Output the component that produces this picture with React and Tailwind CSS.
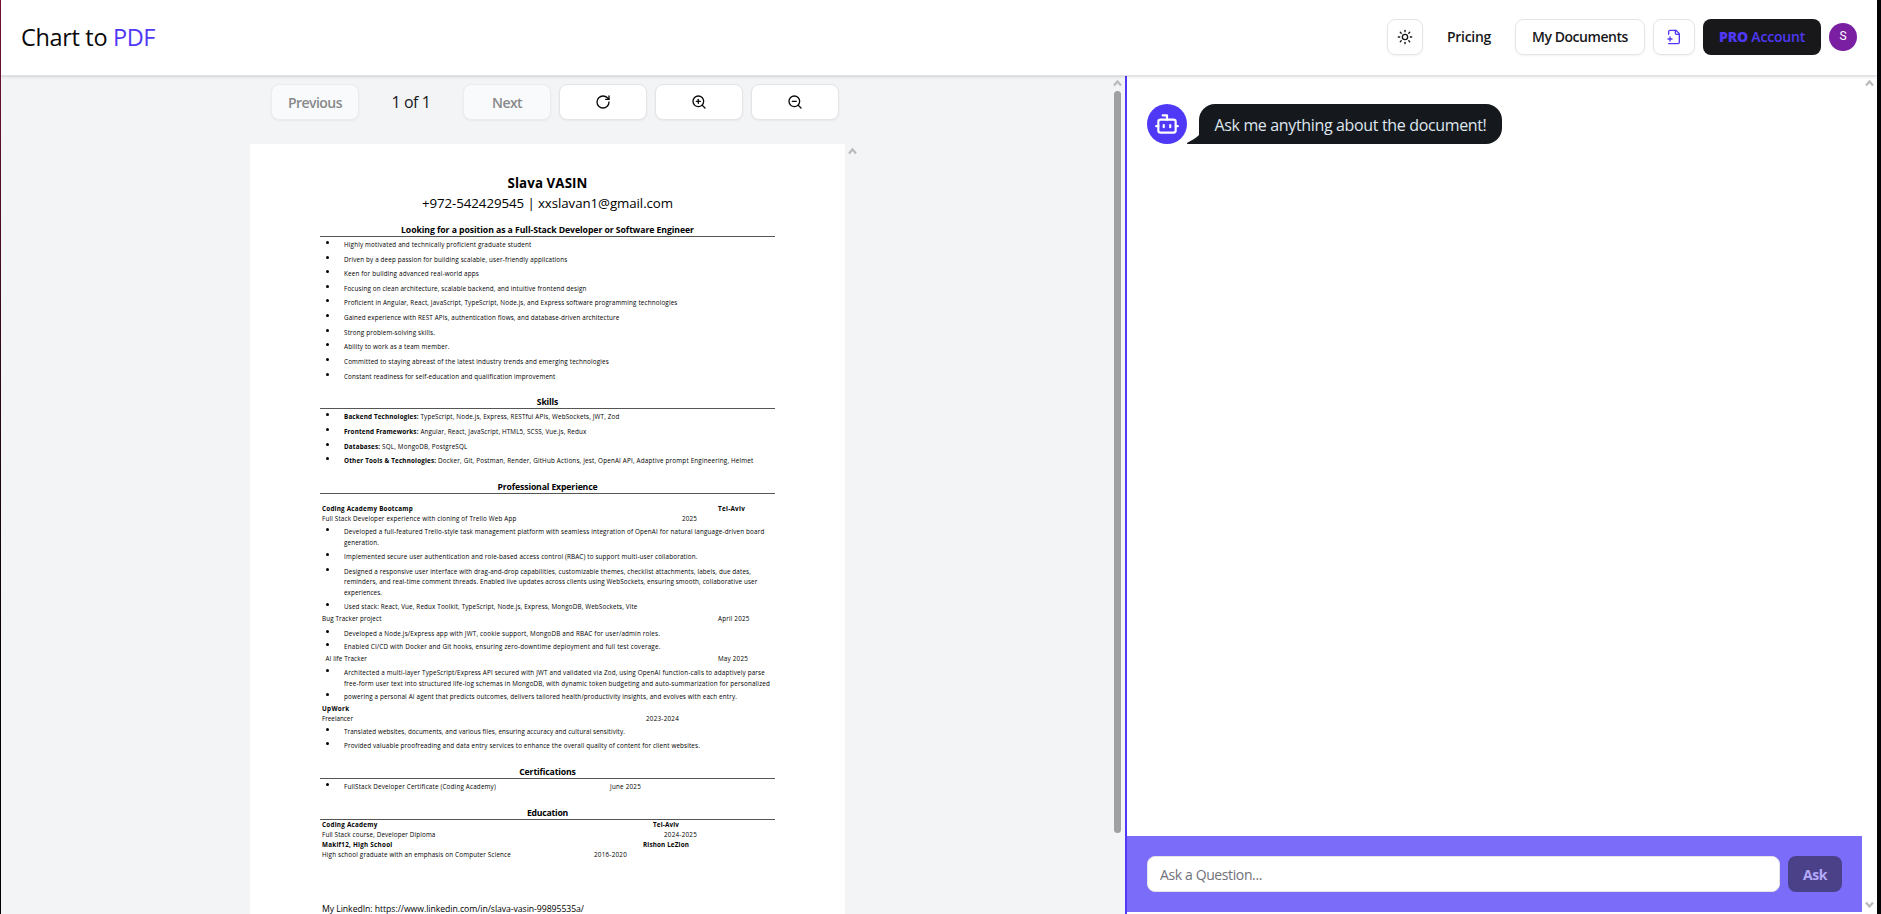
import { useLayoutEffect, useRef, useState } from "react";
import { Sun, RotateCw, ZoomIn, ZoomOut, Bot } from "lucide-react";

// Single line of text whose tracking is adjusted so that it fills `w` pixels.
function Fit({ w, className = "", children }) {
  const ref = useRef(null);
  const [spacing, setSpacing] = useState(0);
  useLayoutEffect(() => {
    const el = ref.current;
    const natural = el.getBoundingClientRect().width;
    setSpacing((w - natural) / el.textContent.length);
  }, [w]);
  return (
    <span ref={ref} className={`inline-block whitespace-pre ${className}`} style={{ letterSpacing: `${spacing}px` }}>
      {children}
    </span>
  );
}

function Arrow({ down = false }) {
  return (
    <svg width="9" height="8" viewBox="0 0 9 8" fill="none" stroke="#b9babc" strokeWidth="2.2" className={down ? "rotate-180" : ""}>
      <path d="M1 6.500 4.500 2.500 8 6.500" />
    </svg>
  );
}

function Bullet({ gap = "", w, label, text, children }) {
  return (
    <div className={`flex h-[10px] items-center pl-[6px] ${gap}`}>
      <span className="mb-[5px] size-[3px] shrink-0 rounded-full bg-black" />
      <span className="w-[15px] shrink-0" />
      <Fit w={w}>
        {label && <b>{label} </b>}
        {text}
      </Fit>
      {children}
    </div>
  );
}

function Continued({ gap = "", w, text }) {
  return (
    <div className={`flex h-[10px] items-center pl-[24px] ${gap}`}>
      <Fit w={w}>{text}</Fit>
    </div>
  );
}

function Entry({ gap = "", bold = false, w, text, side, sideW, sideX }) {
  return (
    <div className={`flex h-[10px] items-center pl-[2px] ${gap} ${bold ? "font-bold" : ""}`}>
      <Fit w={w}>{text}</Fit>
      {side && (
        <div className={`ml-auto flex ${sideX}`}>
          <Fit w={sideW}>{side}</Fit>
        </div>
      )}
    </div>
  );
}

function Heading({ gap = "", w, children }) {
  return (
    <h2 className={`flex h-[14px] items-center justify-center border-b border-[#555] pt-px text-[8.7px] font-bold ${gap}`}>
      <Fit w={w}>{children}</Fit>
    </h2>
  );
}

function Resume() {
  return (
    <article className="h-[770px] w-[595px] shrink-0 bg-white px-[70px] text-[6.3px] leading-[10px] font-medium text-black">
      <h1 className="mt-[29px] flex h-[20px] justify-center text-[13.3px] leading-[20px] font-bold">
        <Fit w={80}>Slava VASIN</Fit>
      </h1>
      <p className="flex h-[20px] justify-center text-[13.3px] leading-[20px] font-normal">
        <Fit w={251}>+972-542429545 | xxslavan1@gmail.com</Fit>
      </p>
      <Heading gap="mt-[10px]" w={293}>Looking for a position as a Full-Stack Developer or Software Engineer</Heading>
      <Bullet gap="mt-[3px]" w={187.5} text="Highly motivated and technically proficient graduate student" />
      <Bullet gap="mt-[5px]" w={223.5} text="Driven by a deep passion for building scalable, user-friendly applications" />
      <Bullet gap="mt-[4px]" w={135} text="Keen for building advanced real-world apps" />
      <Bullet gap="mt-[5px]" w={242.5} text="Focusing on clean architecture, scalable backend, and intuitive frontend design" />
      <Bullet gap="mt-[4px]" w={333.5} text="Proficient in Angular, React, JavaScript, TypeScript, Node.js, and Express software programming technologies" />
      <Bullet gap="mt-[5px]" w={275.5} text="Gained experience with REST APIs, authentication flows, and database-driven architecture" />
      <Bullet gap="mt-[5px]" w={91} text="Strong problem-solving skills." />
      <Bullet gap="mt-[4px]" w={105.5} text="Ability to work as a team member." />
      <Bullet gap="mt-[5px]" w={265} text="Committed to staying abreast of the latest industry trends and emerging technologies" />
      <Bullet gap="mt-[5px]" w={211.5} text="Constant readiness for self-education and qualification improvement" />

      <Heading gap="mt-[13px]" w={21.5}>Skills</Heading>
      <Bullet gap="mt-[3px]" w={275.5} label="Backend Technologies:" text="TypeScript, Node.js, Express, RESTful APIs, WebSockets, JWT, Zod" />
      <Bullet gap="mt-[5px]" w={242.5} label="Frontend Frameworks:" text="Angular, React, JavaScript, HTML5, SCSS, Vue.js, Redux" />
      <Bullet gap="mt-[5px]" w={123.5} label="Databases:" text="SQL, MongoDB, PostgreSQL" />
      <Bullet gap="mt-[4px]" w={409.5} label="Other Tools & Technologies:" text="Docker, Git, Postman, Render, GitHub Actions, Jest, OpenAI API, Adaptive prompt Engineering, Helmet" />

      <Heading gap="mt-[14px]" w={100}>Professional Experience</Heading>
      <Entry gap="mt-[10px]" bold w={91} text="Coding Academy Bootcamp" side="Tel-Aviv" sideW={27} sideX="w-[57px]" />
      <Entry w={194.5} text="Full Stack Developer experience with cloning of Trello Web App" side="2025" sideW={15} sideX="w-[93px]" />
      <Bullet gap="mt-[3px]" w={420.5} text="Developed a full-featured Trello-style task management platform with seamless integration of OpenAI for natural language-driven board" />
      <Continued gap="mt-[1px]" w={35} text="generation." />
      <Bullet gap="mt-[4px]" w={353.5} text="Implemented secure user authentication and role-based access control (RBAC) to support multi-user collaboration." />
      <Bullet gap="mt-[5px]" w={407} text="Designed a responsive user interface with drag-and-drop capabilities, customizable themes, checklist attachments, labels, due dates," />
      <Continued w={413.5} text="reminders, and real-time comment threads. Enabled live updates across clients using WebSockets, ensuring smooth, collaborative user" />
      <Continued gap="mt-[1px]" w={38} text="experiences." />
      <Bullet gap="mt-[4px]" w={293.5} text="Used stack: React, Vue, Redux Toolkit, TypeScript, Node.js, Express, MongoDB, WebSockets, Vite" />
      <Entry gap="mt-[2px]" w={59.5} text="Bug Tracker project" side="April 2025" sideW={31.5} sideX="w-[57px]" />
      <Bullet gap="mt-[5px]" w={316} text="Developed a Node.js/Express app with JWT, cookie support, MongoDB and RBAC for user/admin roles." />
      <Bullet gap="mt-[3px]" w={316.5} text="Enabled CI/CD with Docker and Git hooks, ensuring zero-downtime deployment and full test coverage." />
      <Entry gap="mt-[2px]" w={45} text="  AI life Tracker" side="May 2025" sideW={30} sideX="w-[57px]" />
      <Bullet gap="mt-[4px]" w={421} text="Architected a multi-layer TypeScript/Express API secured with JWT and validated via Zod, using OpenAI function-calls to adaptively parse" />
      <Continued gap="mt-[1px]" w={426} text="free-form user text into structured life-log schemas in MongoDB, with dynamic token budgeting and auto-summarization for personalized" />
      <Bullet gap="mt-[3px]" w={393} text="powering a personal AI agent that predicts outcomes, delivers tailored health/productivity insights, and evolves with each entry." />
      <Entry gap="mt-[2px]" bold w={27.5} text="UpWork" />
      <Entry w={31} text="Freelancer" side="2023-2024" sideW={33} sideX="w-[129px]" />
      <Bullet gap="mt-[3px]" w={281} text="Translated websites, documents, and various files, ensuring accuracy and cultural sensitivity." />
      <Bullet gap="mt-[4px]" w={356} text="Provided valuable proofreading and data entry services to enhance the overall quality of content for client websites." />

      <Heading gap="mt-[14px]" w={56.5}>Certifications</Heading>
      <Bullet gap="mt-[3px]" w={152} text="FullStack Developer Certificate (Coding Academy)">
        <div className="ml-auto flex w-[165px]">
          <Fit w={31}>June 2025</Fit>
        </div>
      </Bullet>

      <Heading gap="mt-[14px]" w={41}>Education</Heading>
      <Entry bold w={55.5} text="Coding Academy" side="Tel-Aviv" sideW={26} sideX="w-[122px]" />
      <Entry w={113.5} text="Full Stack course, Developer Diploma" side="2024-2025" sideW={33} sideX="w-[111px]" />
      <Entry bold w={70.5} text="Makif12, High School" side="Rishon LeZion" sideW={46} sideX="w-[132px]" />
      <Entry w={189} text="High school graduate with an emphasis on Computer Science" side="2016-2020" sideW={33} sideX="w-[181px]" />
      <div className="mt-[44px] flex h-[10px] items-center pl-[2px] text-[8.7px] font-normal">
        <Fit w={262}>My LinkedIn: https://www.linkedin.com/in/slava-vasin-99895535a/</Fit>
      </div>
    </article>
  );
}

const toolButton =
  "flex h-9 w-[88px] items-center justify-center rounded-lg border border-[#e4e4e7] bg-white text-sm font-medium text-[#09090b] shadow-xs";
const disabledButton =
  "flex h-9 w-[88px] items-center justify-center rounded-lg border border-[#ebecee] bg-[#f9fafb] text-[14px] font-semibold text-[#88898b] shadow-xs";

function Header() {
  return (
    <header className="z-10 flex h-[76px] shrink-0 items-center border-b border-[#e1e2e5] bg-white px-5 pb-px shadow-sm">
      <div className="mr-auto text-[23.5px] leading-8 text-[#09090b]">
        <Fit w={92}>Chart to </Fit>
        <Fit w={42} className="text-[#4f39f6]">PDF</Fit>
      </div>
      <nav className="flex items-center gap-2 text-sm font-semibold text-[#18181b]">
        <button className="flex size-9 items-center justify-center rounded-lg border border-[#e4e4e7] shadow-xs">
          <Sun size={16} />
        </button>
        <a className="flex h-9 w-[76px] items-center justify-center"><Fit w={44}>Pricing</Fit></a>
        <button className="flex h-9 w-[130px] items-center justify-center rounded-lg border border-[#e4e4e7] shadow-xs">
          <Fit w={96}>My Documents</Fit>
        </button>
        <button className="flex h-9 w-[42px] items-center justify-center rounded-lg border border-[#e4e4e7] text-[#4f39f6] shadow-xs">
          <svg width="16" height="16" viewBox="0 0 24 24" fill="none" stroke="currentColor" strokeWidth="2" strokeLinecap="round" strokeLinejoin="round">
            <path d="M4 22h14a2 2 0 0 0 2-2V7l-5-5H6a2 2 0 0 0-2 2v4" />
            <path d="M14 2v4a2 2 0 0 0 2 2h4" />
            <path d="M3 15h6" />
            <path d="M6 12v6" />
          </svg>
        </button>
        <button className="flex h-9 w-[118px] items-center justify-center rounded-lg bg-[#18181b] text-[#4f39f6]">
          <Fit w={86}><b className="font-extrabold">PRO</b> <span className="font-semibold">Account</span></Fit>
        </button>
        <div className="flex size-7 items-center justify-center rounded-full bg-[#7b1fa2] font-['Roboto',sans-serif] text-[12px] font-normal text-white">S</div>
      </nav>
    </header>
  );
}

function Viewer() {
  return (
    <section className="flex w-[1124px] shrink-0 overflow-hidden bg-[#f3f4f6]">
      <div className="flex w-[1108px] flex-col items-center pt-2">
        <div className="flex gap-2">
          <button className={disabledButton}><Fit w={54}>Previous</Fit></button>
          <div className="flex w-[88px] items-center justify-center text-[16px] text-[#18181b]"><Fit w={39}>1 of 1</Fit></div>
          <button className={disabledButton}><Fit w={30}>Next</Fit></button>
          <button className={toolButton}><RotateCw size={16} /></button>
          <button className={toolButton}><ZoomIn size={16} /></button>
          <button className={toolButton}><ZoomOut size={16} /></button>
        </div>
        <div className="mt-6 flex w-[610px]">
          <Resume />
          <div className="flex w-[15px] justify-center pt-[3px]"><Arrow /></div>
        </div>
      </div>
      <div className="flex w-4 flex-col items-center pt-[3px] pl-px">
        <Arrow />
        <div className="mt-[4px] h-[742px] w-[7px] rounded-full bg-[#9fa0a2]" />
      </div>
    </section>
  );
}

function Chat() {
  return (
    <section className="flex min-w-0 grow border-l-2 border-[#4f39f6] bg-white">
      <div className="flex w-[735px] flex-col">
        <div className="flex grow items-start px-5 pt-7">
          <div className="flex size-10 items-center justify-center rounded-full bg-[#4f39f6] text-white"><Bot size={26} /></div>
          <svg className="mt-[28px]" width="12" height="12" viewBox="0 0 12 12" fill="#15191e">
            <path d="M12 0v12H.5c-.6 0-.7-.8-.2-1.2C4.500 8.200 9 6.500 12 3z" />
          </svg>
          <div className="flex h-10 w-[303px] items-center justify-center rounded-2xl rounded-bl-none bg-[#15191e] pt-px text-[16px] text-[#dfe6ee]">
            <Fit w={272}>Ask me anything about the document!</Fit>
          </div>
        </div>
        <div className="mb-[2px] flex h-[76px] items-center gap-2 bg-[#7b6cf9] px-5">
          <div className="flex h-9 grow items-center rounded-lg border border-[#e4e4e7] bg-white px-3 pt-px text-[14px] text-[#71717a]">
            <Fit w={102}>Ask a Question...</Fit>
          </div>
          <button className="flex h-9 w-[54px] items-center justify-center rounded-lg bg-[#4a4189] text-[14px] font-bold text-[#b5a9fb]"><Fit w={24}>Ask</Fit></button>
        </div>
      </div>
      <div className="flex w-[15px] flex-col items-center justify-between pt-[3px] pb-[5px]">
        <Arrow />
        <Arrow down />
      </div>
    </section>
  );
}

export default function App() {
  return (
    <div className="flex h-[914px] w-[1881px] overflow-hidden font-['Open_Sans','Noto_Sans',sans-serif]">
      <div className="w-px shrink-0 bg-linear-to-b from-[#7a1236] via-[#1c0510] to-black" />
      <div className="flex w-[1876px] shrink-0 flex-col bg-white">
        <Header />
        <main className="flex min-h-0 grow">
          <Viewer />
          <Chat />
        </main>
      </div>
      <div className="w-1 shrink-0 bg-[#050507]" />
    </div>
  );
}
